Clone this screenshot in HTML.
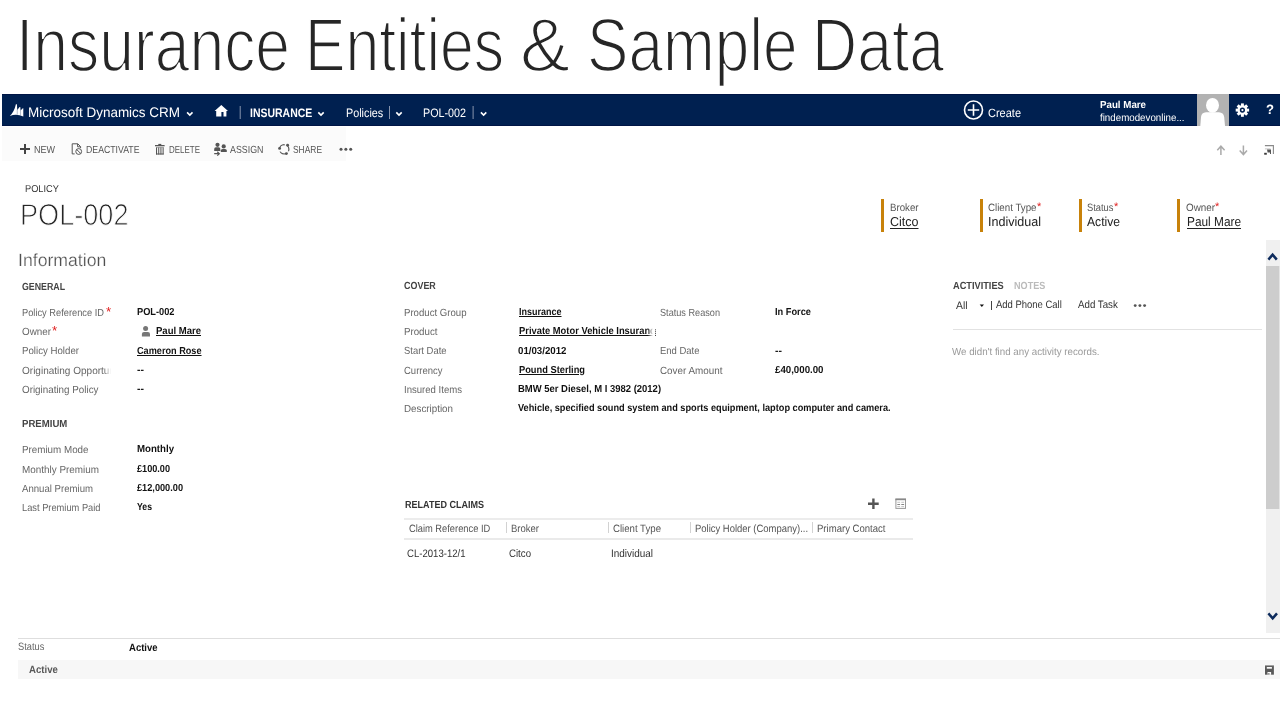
<!DOCTYPE html><html><head><meta charset="utf-8"><title>Insurance Entities &amp; Sample Data</title><style>
html,body{margin:0;padding:0;background:#fff;}
body{width:1280px;height:720px;position:relative;overflow:hidden;font-family:"Liberation Sans", sans-serif;}
.t{position:absolute;white-space:nowrap;transform-origin:0 0;display:block;text-rendering:geometricPrecision;}
.b{position:absolute;}
svg{position:absolute;overflow:visible;}

</style></head><body>
<!-- toolbar bg -->
<div class="b" style="left:2px;top:127px;width:344px;height:34px;background:#fbfbfb;"></div>
<!-- navbar -->
<div class="b" style="left:2px;top:94px;width:1278px;height:32px;background:#002050;box-shadow:inset 0 0.8px 0 #001242, inset 0 -0.8px 0 #001242;"></div>
<!-- avatar bg -->
<div class="b" style="left:1197px;top:94px;width:32px;height:32px;background:#b2b2b2;"></div>
<!-- header bars -->
<div class="b" style="left:881px;top:199px;width:3px;height:33px;background:#c8820a;"></div>
<div class="b" style="left:980px;top:199px;width:3px;height:33px;background:#c8820a;"></div>
<div class="b" style="left:1079px;top:199px;width:3px;height:33px;background:#c8820a;"></div>
<div class="b" style="left:1177px;top:199px;width:3px;height:33px;background:#c8820a;"></div>
<!-- scrollbar -->
<div class="b" style="left:1266px;top:239.7px;width:14px;height:393.5px;background:#f0f0f0;"></div>
<div class="b" style="left:1266px;top:266px;width:14px;height:242.8px;background:#e4e4e4;"></div>
<div class="b" style="left:1266px;top:266px;width:13px;height:242.8px;background:#cdcdcd;"></div>
<!-- related claims lines -->
<div class="b" style="left:404px;top:518px;width:508.5px;height:2px;background:#ececec;"></div>
<div class="b" style="left:404px;top:538.4px;width:508.5px;height:1.8px;background:#eaeaea;"></div>
<div class="b" style="left:505.6px;top:521.5px;width:1px;height:11.5px;background:#d2d2d2;"></div>
<div class="b" style="left:607.8px;top:521.5px;width:1px;height:11.5px;background:#d2d2d2;"></div>
<div class="b" style="left:690px;top:521.5px;width:1px;height:11.5px;background:#d2d2d2;"></div>
<div class="b" style="left:811.9px;top:521.5px;width:1px;height:11.5px;background:#d2d2d2;"></div>
<!-- activities pipe -->
<div class="b" style="left:990.9px;top:300.5px;width:1px;height:9.7px;background:#444;"></div>
<!-- activities line -->
<div class="b" style="left:953px;top:328.7px;width:309px;height:1.2px;background:#e2e2e2;"></div>
<!-- footer -->
<div class="b" style="left:18px;top:638px;width:1262px;height:1px;background:#dedede;"></div>
<div class="b" style="left:18px;top:660px;width:1262px;height:19.2px;background:#f7f7f7;"></div>

<!-- all icons: one page-sized SVG in absolute page coordinates -->
<svg width="1280" height="720" viewBox="0 0 1280 720" style="left:0;top:0;pointer-events:none">
 <!-- dynamics logo -->
 <path d="M9.8 116 Q14.3 111.6 15.9 104.2 L16.9 104.2 L17.25 110.1 L19.6 107 L20.25 107 L20.55 110.6 L22.8 108.3 L23.3 108.3 L23.3 116.6 Q16.6 113.3 9.8 116 Z" fill="#fff"/>
 <path d="M17.25 109.6 V114.7 M20.55 110.2 V115.5" stroke="#002050" stroke-opacity="0.55" stroke-width="0.55" fill="none"/>
 <!-- nav chevrons -->
 <g fill="none" stroke="#fff" stroke-width="1.6">
  <path d="M187.1 112.4 L189.8 115.1 L192.5 112.4"/>
  <path d="M318.3 112.4 L321 115.1 L323.7 112.4"/>
  <path d="M396.3 112.4 L399 115.1 L401.7 112.4"/>
  <path d="M480.9 112.4 L483.6 115.1 L486.3 112.4"/>
 </g>
 <!-- home -->
 <path d="M221.3 105 L228 111 H226.4 V116.6 H223.5 V112 H221.4 V116.6 H216.2 V111 H214.6 Z" fill="#fff"/>
 <!-- nav separators -->
 <g fill="#8794ad">
  <rect x="239.7" y="106" width="1" height="13"/>
  <rect x="389" y="106" width="1" height="13"/>
  <rect x="472.6" y="106" width="1" height="13"/>
 </g>
 <!-- create -->
 <circle cx="973.5" cy="110" r="9" fill="none" stroke="#fff" stroke-width="1.6"/>
 <path d="M967.8 110 H979.2 M973.5 104.3 V115.8" stroke="#fff" stroke-width="1.6" fill="none"/>
 <!-- avatar figure -->
 <ellipse cx="1212.5" cy="105.3" rx="6.5" ry="7.4" fill="#fff"/>
 <path d="M1200.3 126 L1201 117 Q1201.5 112.6 1206 112.3 H1219 Q1223.5 112.6 1224.2 117 L1225 126 Z" fill="#fff"/>
 <!-- gear -->
 <g transform="translate(1242.4 110.1)">
  <g fill="#fff">
   <circle r="4.9"/>
   <rect x="-1.45" y="-6.7" width="2.9" height="13.4"/>
   <rect x="-1.45" y="-6.7" width="2.9" height="13.4" transform="rotate(45)"/>
   <rect x="-1.45" y="-6.7" width="2.9" height="13.4" transform="rotate(90)"/>
   <rect x="-1.45" y="-6.7" width="2.9" height="13.4" transform="rotate(135)"/>
  </g>
  <circle r="2.6" fill="#002050"/>
  <circle r="1.1" fill="#fff"/>
 </g>

 <!-- toolbar: + NEW -->
 <path d="M20 149 H30 M25 144 V154" stroke="#444" stroke-width="2" fill="none"/>
 <!-- deactivate -->
 <g fill="none" stroke="#555" stroke-width="1">
  <path d="M74.6 153.9 H72.2 V143.8 H77.8 L80.6 146.6 V148"/>
  <path d="M77.6 143.9 V146.8 H80.5"/>
  <circle cx="78.7" cy="151.5" r="2.9"/>
  <path d="M76.7 149.5 L80.7 153.5"/>
 </g>
 <!-- delete (trash) -->
 <g fill="#555">
  <rect x="158.3" y="143.9" width="3" height="1.1"/>
  <rect x="155" y="145" width="9.6" height="1.3"/>
  <rect x="156" y="147.3" width="1.05" height="7.2"/>
  <rect x="158.2" y="147.3" width="1.05" height="7.2"/>
  <rect x="160.4" y="147.3" width="1.05" height="7.2"/>
  <rect x="162.6" y="147.3" width="1.05" height="7.2"/>
  <rect x="156" y="153.5" width="7.6" height="1"/>
  <rect x="156" y="147.2" width="7.6" height="0.6" fill="#888"/>
 </g>
 <!-- assign -->
 <g fill="#555">
  <circle cx="217.5" cy="144.8" r="2.1"/>
  <path d="M214.2 151 V149 Q214.2 147.2 216 147.2 H218.6 Q220.3 147.2 220.3 149 V151 Z"/>
  <circle cx="223.7" cy="146.4" r="2.1"/>
  <path d="M220.8 152.1 V150.6 Q220.8 149 222.6 149 H225 Q226.8 149 226.8 150.6 V152.1 Z"/>
 </g>
 <path d="M214.2 153.7 H219.2 M217.3 151.8 L219.3 153.7 L217.3 155.6" fill="none" stroke="#555" stroke-width="1.2"/>
 <!-- share -->
 <g>
  <circle cx="284.2" cy="149.3" r="4.7" fill="none" stroke="#555" stroke-width="1.2"/>
  <g fill="#fbfbfb"><circle cx="286.3" cy="144.6" r="1.6"/><circle cx="279.6" cy="150.2" r="1.5"/><circle cx="287.8" cy="152.6" r="1.5"/></g>
  <g fill="#555"><circle cx="287.6" cy="145.2" r="1.45"/><circle cx="279.6" cy="148.4" r="1.45"/><circle cx="286.4" cy="153.6" r="1.45"/></g>
 </g>
 <!-- more ... -->
 <g fill="#555"><circle cx="341" cy="149.3" r="1.5"/><circle cx="345.85" cy="149.3" r="1.5"/><circle cx="350.7" cy="149.3" r="1.5"/></g>
 <!-- up/down arrows -->
 <g fill="none" stroke="#aaa" stroke-width="1.5">
  <path d="M1220.9 155 V146 M1217.3 150.3 L1220.9 146.2 L1224.6 150.3"/>
  <path d="M1243.4 145.6 V154.8 M1239.7 150.5 L1243.4 154.6 L1247 150.5"/>
 </g>
 <!-- pop-out -->
 <path d="M1264.9 145.6 H1273.4 V154" fill="none" stroke="#8a8a8a" stroke-width="1.1"/>
 <path d="M1264.9 148.9 H1270.5" fill="none" stroke="#bdbdbd" stroke-width="0.9"/>
 <path d="M1267 149.4 H1271 V153.9 H1270 V152.6 H1267.6 Z" fill="#555"/>
 <rect x="1264.2" y="152.8" width="2.6" height="1.9" fill="#3a3a3a"/>

 <!-- person icon (owner) -->
 <g fill="#777">
  <circle cx="145.6" cy="328.5" r="2.5"/>
  <path d="M141.9 336.6 V334 Q141.9 331.9 144 331.9 H147.9 Q150 331.9 150 334 V336.6 Z"/>
 </g>
 <!-- dotted focus remnant -->
 <path d="M655.5 329.4 V336.2" stroke="#333" stroke-width="1" stroke-dasharray="0.9 1" fill="none"/>
 <!-- related claims + and grid -->
 <path d="M868 503.7 H878.7 M873.4 498.4 V508.9" stroke="#555" stroke-width="2.4" fill="none"/>
 <g>
  <rect x="895.9" y="499.1" width="9.6" height="9.3" fill="#fff" stroke="#999" stroke-width="1"/>
  <rect x="895.4" y="498.6" width="10.6" height="1.6" fill="#888"/>
  <g fill="#bbb">
   <rect x="897.3" y="501.8" width="2.8" height="0.9"/><rect x="901.3" y="501.8" width="2.8" height="0.9"/>
   <rect x="897.3" y="506.2" width="2.8" height="0.9"/><rect x="901.3" y="506.2" width="2.8" height="0.9"/>
  </g>
  <g fill="#777"><rect x="897.3" y="504" width="2.8" height="0.9"/><rect x="901.3" y="504" width="2.8" height="0.9"/></g>
 </g>
 <!-- activities dropdown triangle and dots -->
 <path d="M979.7 304.4 H984 L981.85 307 Z" fill="#111"/>
 <g fill="#555"><circle cx="1135.2" cy="305.6" r="1.45"/><circle cx="1139.9" cy="305.6" r="1.45"/><circle cx="1144.6" cy="305.6" r="1.45"/></g>
 <!-- scrollbar chevrons -->
 <g fill="none" stroke="#0d2b5c" stroke-width="2.5">
  <path d="M1268.4 259.6 L1272.6 254.6 L1276.8 259.6"/>
  <path d="M1268.4 613.4 L1272.7 618.4 L1277 613.4"/>
 </g>
 <!-- save icon -->
 <g>
  <rect x="1264.4" y="664.8" width="10.1" height="10.5" fill="#fcfcfc"/>
  <rect x="1265" y="665.5" width="8.9" height="9.2" fill="#5a5a5a"/>
  <rect x="1265" y="665.4" width="8.9" height="0.7" fill="#9a9a9a"/>
  <rect x="1266.8" y="667" width="5.1" height="1.7" fill="#fafafa"/>
  <rect x="1267.5" y="672" width="3.6" height="2.8" fill="#fafafa"/>
  <rect x="1267.5" y="673" width="2.1" height="1.7" fill="#999"/>
 </g>
</svg>

<span class="t" style="left:16.20px;top:8px;font-size:75.5px;line-height:75.5px;font-weight:400;color:#262626;transform:scaleX(0.8265);color:#262626;-webkit-text-stroke:2px #fff;paint-order:fill stroke;">Insurance</span>
<span class="t" style="left:305.40px;top:8px;font-size:75.5px;line-height:75.5px;font-weight:400;color:#262626;transform:scaleX(0.8039);color:#262626;-webkit-text-stroke:2px #fff;paint-order:fill stroke;">Entities</span>
<span class="t" style="left:520.00px;top:8px;font-size:75.5px;line-height:75.5px;font-weight:400;color:#262626;transform:scaleX(0.9931);color:#262626;-webkit-text-stroke:2px #fff;paint-order:fill stroke;">&amp;</span>
<span class="t" style="left:586.60px;top:8px;font-size:75.5px;line-height:75.5px;font-weight:400;color:#262626;transform:scaleX(0.8224);color:#262626;-webkit-text-stroke:2px #fff;paint-order:fill stroke;">Sample</span>
<span class="t" style="left:812.40px;top:8px;font-size:75.5px;line-height:75.5px;font-weight:400;color:#262626;transform:scaleX(0.8278);color:#262626;-webkit-text-stroke:2px #fff;paint-order:fill stroke;">Data</span>
<span class="t" style="left:27.90px;top:106px;font-size:13.9px;line-height:13.9px;font-weight:400;color:#fff;transform:scaleX(0.9704);">Microsoft Dynamics CRM</span>
<span class="t" style="left:250.20px;top:107px;font-size:12.2px;line-height:12.2px;font-weight:700;color:#fff;transform:scaleX(0.8600);">INSURANCE</span>
<span class="t" style="left:345.80px;top:107px;font-size:12.2px;line-height:12.2px;font-weight:400;color:#fff;transform:scaleX(0.8859);">Policies</span>
<span class="t" style="left:423.30px;top:107px;font-size:12.2px;line-height:12.2px;font-weight:400;color:#fff;transform:scaleX(0.8817);">POL-002</span>
<span class="t" style="left:987.50px;top:107px;font-size:12px;line-height:12px;font-weight:400;color:#fff;transform:scaleX(0.9161);">Create</span>
<span class="t" style="left:1100.30px;top:101px;font-size:10.2px;line-height:10.2px;font-weight:700;color:#fff;transform:scaleX(0.9557);">Paul Mare</span>
<span class="t" style="left:1100.30px;top:114px;font-size:10.4px;line-height:10.4px;font-weight:400;color:#fff;transform:scaleX(0.9378);">findemodevonline...</span>
<span class="t" style="left:1265.50px;top:103px;font-size:13.5px;line-height:13.5px;font-weight:700;color:#fff;transform:scaleX(0.9699);">?</span>
<span class="t" style="left:34.30px;top:146px;font-size:10.3px;line-height:10.3px;font-weight:400;color:#555;transform:scaleX(0.8740);">NEW</span>
<span class="t" style="left:85.50px;top:146px;font-size:10.3px;line-height:10.3px;font-weight:400;color:#555;transform:scaleX(0.8477);">DEACTIVATE</span>
<span class="t" style="left:169.00px;top:146px;font-size:10.3px;line-height:10.3px;font-weight:400;color:#555;transform:scaleX(0.7739);">DELETE</span>
<span class="t" style="left:229.50px;top:146px;font-size:10.3px;line-height:10.3px;font-weight:400;color:#555;transform:scaleX(0.8609);">ASSIGN</span>
<span class="t" style="left:292.50px;top:146px;font-size:10.3px;line-height:10.3px;font-weight:400;color:#555;transform:scaleX(0.8174);">SHARE</span>
<span class="t" style="left:24.60px;top:185px;font-size:10px;line-height:10px;font-weight:400;color:#333;transform:scaleX(0.9215);">POLICY</span>
<span class="t" style="left:20.00px;top:201px;font-size:30.2px;line-height:30.2px;font-weight:400;color:#262626;transform:scaleX(0.8981);-webkit-text-stroke:0.9px #fff;paint-order:fill stroke;">POL-002</span>
<span class="t" style="left:889.50px;top:203px;font-size:10.6px;line-height:10.6px;font-weight:400;color:#555;transform:scaleX(0.9136);">Broker</span>
<span class="t" style="left:890.00px;top:215px;font-size:13px;line-height:13px;font-weight:400;color:#222;transform:scaleX(0.9622);text-decoration:underline;text-underline-offset:1.5px;text-decoration-thickness:1px;">Citco</span>
<span class="t" style="left:988.10px;top:203px;font-size:10.6px;line-height:10.6px;font-weight:400;color:#555;transform:scaleX(0.9185);">Client Type</span>
<span class="t" style="left:1036.80px;top:202px;font-size:11px;line-height:11px;font-weight:400;color:#e02020;transform:scaleX(1.0046);">*</span>
<span class="t" style="left:988.10px;top:215px;font-size:13px;line-height:13px;font-weight:400;color:#222;transform:scaleX(0.9649);">Individual</span>
<span class="t" style="left:1087.20px;top:203px;font-size:10.6px;line-height:10.6px;font-weight:400;color:#555;transform:scaleX(0.8821);">Status</span>
<span class="t" style="left:1114.00px;top:202px;font-size:11px;line-height:11px;font-weight:400;color:#e02020;transform:scaleX(1.0046);">*</span>
<span class="t" style="left:1087.20px;top:215px;font-size:13px;line-height:13px;font-weight:400;color:#222;transform:scaleX(0.9322);">Active</span>
<span class="t" style="left:1185.50px;top:203px;font-size:10.6px;line-height:10.6px;font-weight:400;color:#555;transform:scaleX(0.9296);">Owner</span>
<span class="t" style="left:1215.00px;top:202px;font-size:11px;line-height:11px;font-weight:400;color:#e02020;transform:scaleX(1.0046);">*</span>
<span class="t" style="left:1186.50px;top:215px;font-size:13px;line-height:13px;font-weight:400;color:#222;transform:scaleX(0.9116);text-decoration:underline;text-underline-offset:1.5px;text-decoration-thickness:1px;">Paul Mare</span>
<span class="t" style="left:17.80px;top:252px;font-size:17.7px;line-height:17.7px;font-weight:400;color:#505050;transform:scaleX(0.9981);-webkit-text-stroke:0.25px #fff;paint-order:fill stroke;">Information</span>
<span class="t" style="left:22.00px;top:283px;font-size:10.3px;line-height:10.3px;font-weight:700;color:#444;transform:scaleX(0.8543);">GENERAL</span>
<span class="t" style="left:21.50px;top:309px;font-size:10.3px;line-height:10.3px;font-weight:400;color:#666;transform:scaleX(0.9013);">Policy Reference ID</span>
<span class="t" style="left:106.00px;top:305px;font-size:13px;line-height:13px;font-weight:400;color:#e02020;transform:scaleX(1.0274);">*</span>
<span class="t" style="left:137.00px;top:308px;font-size:10.2px;line-height:10.2px;font-weight:700;color:#111;transform:scaleX(0.9072);">POL-002</span>
<span class="t" style="left:21.50px;top:328px;font-size:10.3px;line-height:10.3px;font-weight:400;color:#666;transform:scaleX(0.9564);">Owner</span>
<span class="t" style="left:51.90px;top:324px;font-size:13px;line-height:13px;font-weight:400;color:#e02020;transform:scaleX(1.0274);">*</span>
<span class="t" style="left:155.80px;top:327px;font-size:10.2px;line-height:10.2px;font-weight:700;color:#111;transform:scaleX(0.9349);text-decoration:underline;text-underline-offset:1px;text-decoration-thickness:1px;">Paul Mare</span>
<span class="t" style="left:21.50px;top:347px;font-size:10.3px;line-height:10.3px;font-weight:400;color:#666;transform:scaleX(0.9397);">Policy Holder</span>
<span class="t" style="left:137.00px;top:347px;font-size:10.2px;line-height:10.2px;font-weight:700;color:#111;transform:scaleX(0.8972);text-decoration:underline;text-underline-offset:1px;text-decoration-thickness:1px;">Cameron Rose</span>
<div class="b" style="left:21.50px;top:363px;width:89.50px;height:21.30px;overflow:hidden;-webkit-mask-image:linear-gradient(90deg,#000 92%,transparent 100%);mask-image:linear-gradient(90deg,#000 92%,transparent 100%);"><span class="t" style="left:0;top:4px;font-size:10.3px;line-height:10.3px;font-weight:400;color:#666;transform:scaleX(0.9729);">Originating Opportunity</span></div>
<span class="t" style="left:137.00px;top:366px;font-size:10.2px;line-height:10.2px;font-weight:700;color:#111;transform:scaleX(1.0301);">--</span>
<span class="t" style="left:21.50px;top:386px;font-size:10.3px;line-height:10.3px;font-weight:400;color:#666;transform:scaleX(0.9549);">Originating Policy</span>
<span class="t" style="left:137.00px;top:385px;font-size:10.2px;line-height:10.2px;font-weight:700;color:#111;transform:scaleX(1.0301);">--</span>
<span class="t" style="left:22.00px;top:420px;font-size:10.3px;line-height:10.3px;font-weight:700;color:#444;transform:scaleX(0.9318);">PREMIUM</span>
<span class="t" style="left:21.50px;top:446px;font-size:10.3px;line-height:10.3px;font-weight:400;color:#666;transform:scaleX(0.9527);">Premium Mode</span>
<span class="t" style="left:137.00px;top:445px;font-size:10.2px;line-height:10.2px;font-weight:700;color:#111;transform:scaleX(0.9478);">Monthly</span>
<span class="t" style="left:21.50px;top:466px;font-size:10.3px;line-height:10.3px;font-weight:400;color:#666;transform:scaleX(0.9614);">Monthly Premium</span>
<span class="t" style="left:137.00px;top:465px;font-size:10.2px;line-height:10.2px;font-weight:700;color:#111;transform:scaleX(0.8962);">£100.00</span>
<span class="t" style="left:21.50px;top:485px;font-size:10.3px;line-height:10.3px;font-weight:400;color:#666;transform:scaleX(0.9329);">Annual Premium</span>
<span class="t" style="left:137.00px;top:484px;font-size:10.2px;line-height:10.2px;font-weight:700;color:#111;transform:scaleX(0.9021);">£12,000.00</span>
<span class="t" style="left:21.50px;top:504px;font-size:10.3px;line-height:10.3px;font-weight:400;color:#666;transform:scaleX(0.9025);">Last Premium Paid</span>
<span class="t" style="left:137.00px;top:503px;font-size:10.2px;line-height:10.2px;font-weight:700;color:#111;transform:scaleX(0.8535);">Yes</span>
<span class="t" style="left:403.70px;top:282px;font-size:10.3px;line-height:10.3px;font-weight:700;color:#444;transform:scaleX(0.8684);">COVER</span>
<span class="t" style="left:403.50px;top:309px;font-size:10.3px;line-height:10.3px;font-weight:400;color:#666;transform:scaleX(0.9335);">Product Group</span>
<span class="t" style="left:519.00px;top:308px;font-size:10.2px;line-height:10.2px;font-weight:700;color:#111;transform:scaleX(0.8830);text-decoration:underline;text-underline-offset:1px;text-decoration-thickness:1px;">Insurance</span>
<span class="t" style="left:659.50px;top:309px;font-size:10.3px;line-height:10.3px;font-weight:400;color:#666;transform:scaleX(0.8884);">Status Reason</span>
<span class="t" style="left:775.00px;top:308px;font-size:10.2px;line-height:10.2px;font-weight:700;color:#111;transform:scaleX(0.9083);">In Force</span>
<span class="t" style="left:403.50px;top:328px;font-size:10.3px;line-height:10.3px;font-weight:400;color:#666;transform:scaleX(0.9439);">Product</span>
<div class="b" style="left:519.00px;top:323px;width:134.00px;height:21.20px;overflow:hidden;-webkit-mask-image:linear-gradient(90deg,#000 96%,transparent 100%);mask-image:linear-gradient(90deg,#000 96%,transparent 100%);"><span class="t" style="left:0;top:4px;font-size:10.2px;line-height:10.2px;font-weight:700;color:#111;transform:scaleX(0.9189);text-decoration:underline;text-underline-offset:1px;text-decoration-thickness:1px;">Private Motor Vehicle Insurance</span></div>
<span class="t" style="left:403.50px;top:347px;font-size:10.3px;line-height:10.3px;font-weight:400;color:#666;transform:scaleX(0.9169);">Start Date</span>
<span class="t" style="left:518.20px;top:347px;font-size:10.2px;line-height:10.2px;font-weight:700;color:#111;transform:scaleX(0.9512);">01/03/2012</span>
<span class="t" style="left:659.50px;top:347px;font-size:10.3px;line-height:10.3px;font-weight:400;color:#666;transform:scaleX(0.9201);">End Date</span>
<span class="t" style="left:775.00px;top:347px;font-size:10.2px;line-height:10.2px;font-weight:700;color:#111;transform:scaleX(1.0301);">--</span>
<span class="t" style="left:403.50px;top:367px;font-size:10.3px;line-height:10.3px;font-weight:400;color:#666;transform:scaleX(0.9217);">Currency</span>
<span class="t" style="left:519.00px;top:366px;font-size:10.2px;line-height:10.2px;font-weight:700;color:#111;transform:scaleX(0.9111);text-decoration:underline;text-underline-offset:1px;text-decoration-thickness:1px;">Pound Sterling</span>
<span class="t" style="left:659.50px;top:367px;font-size:10.3px;line-height:10.3px;font-weight:400;color:#666;transform:scaleX(0.9580);">Cover Amount</span>
<span class="t" style="left:775.00px;top:366px;font-size:10.2px;line-height:10.2px;font-weight:700;color:#111;transform:scaleX(0.9512);">£40,000.00</span>
<span class="t" style="left:403.50px;top:386px;font-size:10.3px;line-height:10.3px;font-weight:400;color:#666;transform:scaleX(0.9298);">Insured Items</span>
<span class="t" style="left:518.20px;top:385px;font-size:10.2px;line-height:10.2px;font-weight:700;color:#111;transform:scaleX(0.9287);">BMW 5er Diesel, M I 3982 (2012)</span>
<span class="t" style="left:403.50px;top:405px;font-size:10.3px;line-height:10.3px;font-weight:400;color:#666;transform:scaleX(0.9514);">Description</span>
<span class="t" style="left:518.20px;top:404px;font-size:10.2px;line-height:10.2px;font-weight:700;color:#111;transform:scaleX(0.9015);">Vehicle, specified sound system and sports equipment, laptop computer and camera.</span>
<span class="t" style="left:405.20px;top:501px;font-size:10.3px;line-height:10.3px;font-weight:700;color:#333;transform:scaleX(0.8760);">RELATED CLAIMS</span>
<span class="t" style="left:408.70px;top:524px;font-size:10.6px;line-height:10.6px;font-weight:400;color:#555;transform:scaleX(0.8786);">Claim Reference ID</span>
<span class="t" style="left:511.20px;top:524px;font-size:10.6px;line-height:10.6px;font-weight:400;color:#555;transform:scaleX(0.8975);">Broker</span>
<span class="t" style="left:612.90px;top:524px;font-size:10.6px;line-height:10.6px;font-weight:400;color:#555;transform:scaleX(0.9091);">Client Type</span>
<span class="t" style="left:695.20px;top:524px;font-size:10.6px;line-height:10.6px;font-weight:400;color:#555;transform:scaleX(0.8929);">Policy Holder (Company)...</span>
<span class="t" style="left:817.30px;top:524px;font-size:10.6px;line-height:10.6px;font-weight:400;color:#555;transform:scaleX(0.9021);">Primary Contact</span>
<span class="t" style="left:406.70px;top:549px;font-size:10.9px;line-height:10.9px;font-weight:400;color:#333;transform:scaleX(0.8784);">CL-2013-12/1</span>
<span class="t" style="left:508.60px;top:549px;font-size:10.9px;line-height:10.9px;font-weight:400;color:#333;transform:scaleX(0.8868);">Citco</span>
<span class="t" style="left:610.60px;top:549px;font-size:10.9px;line-height:10.9px;font-weight:400;color:#333;transform:scaleX(0.9129);">Individual</span>
<span class="t" style="left:952.50px;top:282px;font-size:10.3px;line-height:10.3px;font-weight:700;color:#444;transform:scaleX(0.8953);">ACTIVITIES</span>
<span class="t" style="left:1014.20px;top:282px;font-size:10.3px;line-height:10.3px;font-weight:700;color:#bbb;transform:scaleX(0.8823);">NOTES</span>
<span class="t" style="left:956.20px;top:301px;font-size:10.8px;line-height:10.8px;font-weight:400;color:#333;transform:scaleX(0.9585);">All</span>
<span class="t" style="left:996.30px;top:300px;font-size:10.8px;line-height:10.8px;font-weight:400;color:#333;transform:scaleX(0.8771);">Add Phone Call</span>
<span class="t" style="left:1077.80px;top:300px;font-size:10.8px;line-height:10.8px;font-weight:400;color:#333;transform:scaleX(0.9002);">Add Task</span>
<span class="t" style="left:952.40px;top:348px;font-size:10.3px;line-height:10.3px;font-weight:400;color:#999;transform:scaleX(0.9473);">We didn't find any activity records.</span>
<span class="t" style="left:18.00px;top:642px;font-size:10.6px;line-height:10.6px;font-weight:400;color:#666;transform:scaleX(0.8755);">Status</span>
<span class="t" style="left:129.00px;top:643px;font-size:10.5px;line-height:10.5px;font-weight:700;color:#111;transform:scaleX(0.9077);">Active</span>
<span class="t" style="left:29.20px;top:665px;font-size:10.5px;line-height:10.5px;font-weight:700;color:#585858;transform:scaleX(0.9140);">Active</span>
</body></html>
